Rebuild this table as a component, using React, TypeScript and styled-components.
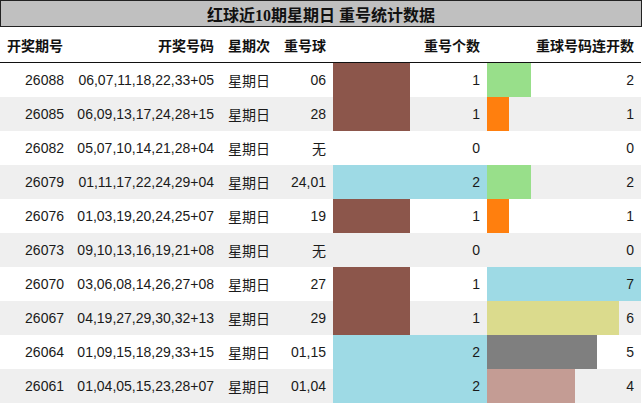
import styled, { createGlobalStyle } from "styled-components";

type Row = {
  issue: string;
  numbers: string;
  weekday: string;
  repeat: string;
  count: number;
  streak: number;
};

const rows: Row[] = [
  { issue: "26088", numbers: "06,07,11,18,22,33+05", weekday: "星期日", repeat: "06", count: 1, streak: 2 },
  { issue: "26085", numbers: "06,09,13,17,24,28+15", weekday: "星期日", repeat: "28", count: 1, streak: 1 },
  { issue: "26082", numbers: "05,07,10,14,21,28+04", weekday: "星期日", repeat: "无", count: 0, streak: 0 },
  { issue: "26079", numbers: "01,11,17,22,24,29+04", weekday: "星期日", repeat: "24,01", count: 2, streak: 2 },
  { issue: "26076", numbers: "01,03,19,20,24,25+07", weekday: "星期日", repeat: "19", count: 1, streak: 1 },
  { issue: "26073", numbers: "09,10,13,16,19,21+08", weekday: "星期日", repeat: "无", count: 0, streak: 0 },
  { issue: "26070", numbers: "03,06,08,14,26,27+08", weekday: "星期日", repeat: "27", count: 1, streak: 7 },
  { issue: "26067", numbers: "04,19,27,29,30,32+13", weekday: "星期日", repeat: "29", count: 1, streak: 6 },
  { issue: "26064", numbers: "01,09,15,18,29,33+15", weekday: "星期日", repeat: "01,15", count: 2, streak: 5 },
  { issue: "26061", numbers: "01,04,05,15,23,28+07", weekday: "星期日", repeat: "01,04", count: 2, streak: 4 },
];

// colours per value (tab20-ish)
const countColors: Record<number, string> = {
  1: "#8c564b",
  2: "#9edae5",
};

const streakColors: Record<number, string> = {
  1: "#ff7f0e",
  2: "#98df8a",
  4: "#c49c94",
  5: "#7f7f7f",
  6: "#dbdb8d",
  7: "#9edae5",
};

const GlobalStyle = createGlobalStyle`
  body {
    margin: 0;
    background: #ffffff;
    font-family: "Liberation Sans", "Noto Sans CJK SC", sans-serif;
    color: #1a1a1a;
  }
`;

const Wrapper = styled.div`
  width: 642px;
  height: 404px;
  overflow: hidden;
`;

const Title = styled.div`
  height: 27px;
  box-sizing: border-box;
  border: 1px solid #222;
  background: #c0c0c0;
  display: flex;
  align-items: center;
  justify-content: center;
  font-family: "Liberation Serif", "Noto Sans CJK SC", serif;
  font-weight: 700;
  font-size: 16px;
  color: #111;
`;

const Grid = styled.div`
  width: 641px;
  display: grid;
  grid-template-columns: 71px 150px 56px 56px 154px 154px;
`;

const HeadCell = styled.div<{ $align?: "left" | "right" }>`
  height: 35px;
  border-bottom: 1px solid #111;
  display: flex;
  align-items: center;
  justify-content: ${(p) => (p.$align === "left" ? "flex-start" : "flex-end")};
  padding: 0 7px;
  font-weight: 700;
  font-size: 14px;
  color: #111;
  font-family: "Noto Sans CJK SC", sans-serif;
`;

const Cell = styled.div<{ $stripe: boolean; $align?: "left" | "right" }>`
  height: 34px;
  display: flex;
  align-items: center;
  justify-content: ${(p) => (p.$align === "left" ? "flex-start" : "flex-end")};
  padding: 0 7px;
  font-size: 14px;
  background: ${(p) => (p.$stripe ? "#efefef" : "#ffffff")};
  white-space: nowrap;
`;

const Cjk = styled.span`
  font-family: "Noto Sans CJK SC", sans-serif;
`;

const BarCell = styled(Cell)<{ $color: string; $w: number }>`
  background: ${(p) =>
    p.$w > 0
      ? `linear-gradient(to right, ${p.$color} ${p.$w}px, ${p.$stripe ? "#efefef" : "#ffffff"} ${p.$w}px)`
      : p.$stripe
      ? "#efefef"
      : "#ffffff"};
`;

export default function App() {
  return (
    <Wrapper>
      <GlobalStyle />
      <Title>红球近10期星期日 重号统计数据</Title>
      <Grid>
        <HeadCell $align="left">开奖期号</HeadCell>
        <HeadCell>开奖号码</HeadCell>
        <HeadCell $align="left">星期次</HeadCell>
        <HeadCell>重号球</HeadCell>
        <HeadCell>重号个数</HeadCell>
        <HeadCell>重球号码连开数</HeadCell>
        {rows.map((r, i) => {
          const stripe = i % 2 === 1;
          return [
            <Cell key={`a${i}`} $stripe={stripe}>{r.issue}</Cell>,
            <Cell key={`b${i}`} $stripe={stripe}>{r.numbers}</Cell>,
            <Cell key={`c${i}`} $stripe={stripe} $align="left">
              <Cjk>{r.weekday}</Cjk>
            </Cell>,
            <Cell key={`d${i}`} $stripe={stripe}>
              {r.repeat === "无" ? <Cjk>{r.repeat}</Cjk> : r.repeat}
            </Cell>,
            <BarCell
              key={`e${i}`}
              $stripe={stripe}
              $color={countColors[r.count] || "transparent"}
              $w={r.count * 77}
            >
              {r.count}
            </BarCell>,
            <BarCell
              key={`f${i}`}
              $stripe={stripe}
              $color={streakColors[r.streak] || "transparent"}
              $w={r.streak * 22}
            >
              {r.streak}
            </BarCell>,
          ];
        })}
      </Grid>
    </Wrapper>
  );
}
